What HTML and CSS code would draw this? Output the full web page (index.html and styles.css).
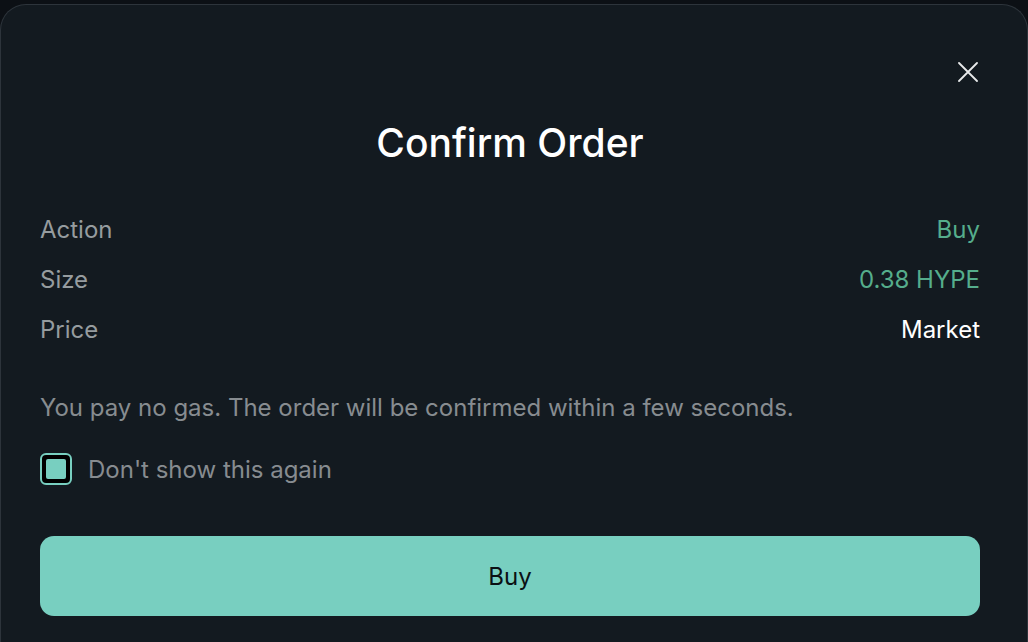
FILE: index.html
```html
<!DOCTYPE html>
<html lang="en">
<head>
    <meta charset="UTF-8">
    <title>Confirm Order</title>
    <link rel="stylesheet" href="styles.css">
</head>
<body>
    <div class="backdrop">
        <div class="modal">
            <div class="modal-head">
                <button class="close-btn" aria-label="Close">
                    <svg width="20" height="20" viewBox="0 0 20 20">
                        <path d="M1 1L19 19M19 1L1 19" stroke="#e8eaeb" stroke-width="1.8" stroke-linecap="round"/>
                    </svg>
                </button>
            </div>
            <h2 class="title">Confirm Order</h2>

            <div class="rows">
                <div class="row"><span class="label">Action</span><span class="value green">Buy</span></div>
                <div class="row"><span class="label">Size</span><span class="value green">0.38 HYPE</span></div>
                <div class="row"><span class="label">Price</span><span class="value">Market</span></div>
            </div>

            <p class="note">You pay no gas. The order will be confirmed within a few seconds.</p>

            <label class="check">
                <span class="box"><span class="tick"></span></span>
                Don't show this again
            </label>

            <button class="buy-btn">Buy</button>
        </div>
    </div>
</body>
</html>
```

FILE: styles.css
```css
body {
    margin: 0;
    background-color: #0c1015;
    font-family: 'Inter', 'Noto Sans', sans-serif;
    overflow: hidden;
}
.backdrop {
    height: 642px;
    padding-top: 4px;
    box-sizing: border-box;
}
.modal {
    background-color: #131a20;
    border: 1px solid #2d343b;
    border-bottom: none;
    border-radius: 26px 26px 0 0;
    height: 100%;
    box-sizing: border-box;
    padding: 57px 47px 0 39px;
}
.modal-head {
    display: flex;
    justify-content: flex-end;
    padding-right: 2px;
}
.close-btn {
    background: none;
    border: none;
    padding: 0;
    width: 20px;
    height: 20px;
    cursor: pointer;
}
.close-btn svg {
    display: block;
}
.title {
    margin: 38px 0 0 0;
    text-align: center;
    font-size: 39px;
    line-height: 46px;
    font-weight: 500;
    color: #ffffff;
}
.rows {
    margin-top: 39px;
}
.row {
    display: flex;
    justify-content: space-between;
    height: 50px;
    line-height: 50px;
    font-size: 24px;
}
.label {
    color: #969c9f;
}
.value {
    color: #ffffff;
}
.value.green {
    color: #55ad8c;
}
.note {
    margin: 38px 0 0 0;
    font-size: 24px;
    line-height: 30px;
    color: #878c90;
}
.check {
    display: flex;
    align-items: center;
    gap: 16px;
    margin-top: 30px;
    font-size: 24px;
    color: #878c90;
}
.box {
    width: 32px;
    height: 32px;
    box-sizing: border-box;
    border: 2px solid #78cfc0;
    border-radius: 6px;
    background-color: #000000;
    padding: 4px;
}
.tick {
    display: block;
    width: 100%;
    height: 100%;
    background-color: #78cfc0;
    border-radius: 2px;
}
.buy-btn {
    display: block;
    width: 100%;
    height: 80px;
    margin-top: 51px;
    border: none;
    border-radius: 14px;
    background-color: #78cfc0;
    color: #0b1014;
    font-family: 'Inter', 'Noto Sans', sans-serif;
    font-size: 24px;
    cursor: pointer;
}
```
